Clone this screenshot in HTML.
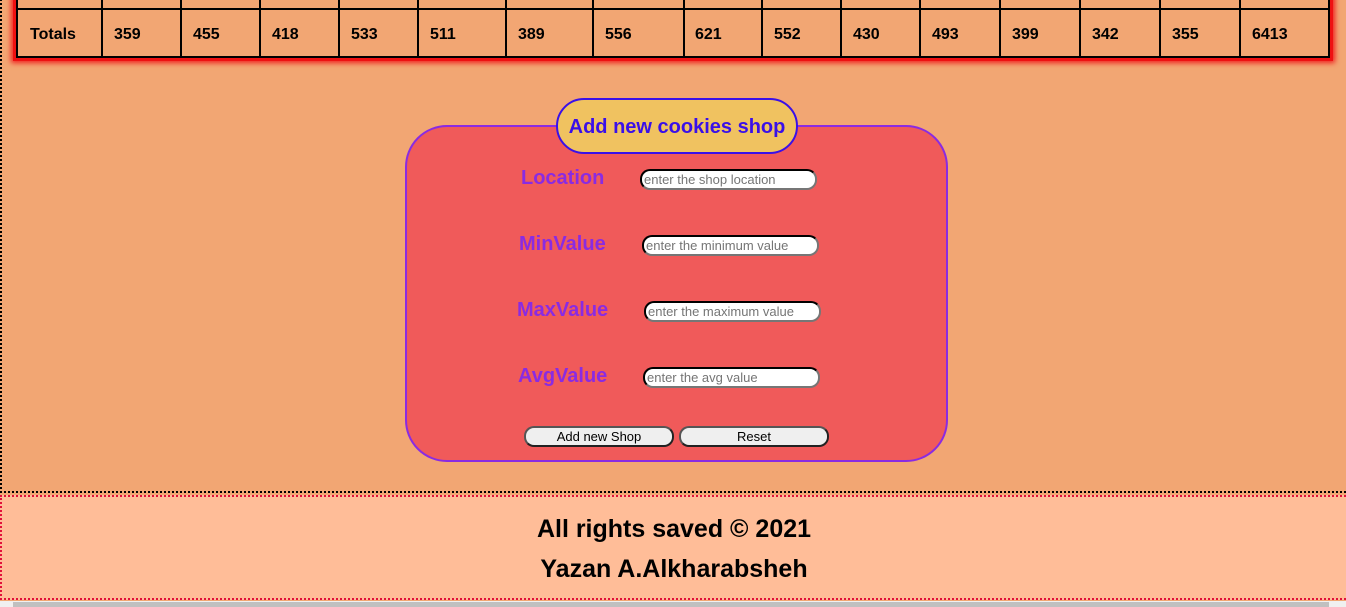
<!DOCTYPE html>
<html><head><style>
body{margin:0;width:1346px;height:607px;overflow:hidden;background:#f2a673;font-family:"Liberation Sans",Arial,sans-serif;position:relative}
.main{position:absolute;left:0;top:-10px;width:1346px;height:503px;border-left:2px dotted #000;border-bottom:2px dotted #000;box-sizing:border-box}
.tbl{position:absolute;left:13px;top:-10px;width:1320px;height:71px;border:3px solid #ee1111;box-shadow:0 0 5px 2px #f02020;box-sizing:border-box}
.tbl .in{position:absolute;left:0;top:0;right:0;bottom:0;border:2px solid #000}
.vl{position:absolute;top:0;bottom:0;width:2px;background:#000}
.hl{position:absolute;left:0;right:0;top:13px;height:2px;background:#000}
.c{position:absolute;top:31px;font-weight:bold;font-size:16px;color:#000}
.fs{position:absolute;left:405px;top:125px;width:543px;height:337px;box-sizing:border-box;background:#f05a5a;border:2px solid #8a2be2;border-radius:42px}
.lg{position:absolute;left:556px;top:98px;width:242px;height:56px;box-sizing:border-box;background:#f0c260;border:2px solid #3a10e8;border-radius:28px;color:#3a10e8;font-weight:bold;font-size:20px;text-align:center;line-height:54px}
.lb{position:absolute;color:#8a2be2;font-weight:bold;font-size:20px}
.ip{position:absolute;width:177px;height:21px;box-sizing:border-box;background:#fff;border:2px inset #767676;border-top-color:#222;border-left-color:#222;border-radius:10px;font-size:13px;color:#757575;line-height:17px;padding-left:2px;white-space:nowrap;overflow:hidden}
.bt{position:absolute;top:426px;width:150px;height:21px;box-sizing:border-box;background:#efefef;border:2px solid #555;border-right-color:#222;border-bottom-color:#222;border-radius:10px;font-size:13px;text-align:center;line-height:17px;color:#000}
.ft{position:absolute;left:0;top:495px;width:1346px;height:105px;box-sizing:border-box;background:#ffbd98;border-top:2px dotted #e0103a;border-bottom:2px dotted #e0103a;border-left:2px dotted #e0103a;text-align:center;font-weight:bold;font-size:25px;color:#000}
.sb{position:absolute;left:0;top:601px;width:1346px;height:6px;background:#f0f0f0}
.th{position:absolute;left:13px;top:602px;width:1316px;height:5px;background:#c0c0c0}
</style></head><body>
<div class="main"></div>
<div class="tbl"><div class="in">
<div class="hl"></div>
<div class="vl" style="left:83px"></div><div class="vl" style="left:162px"></div><div class="vl" style="left:241px"></div><div class="vl" style="left:320px"></div><div class="vl" style="left:399px"></div><div class="vl" style="left:487px"></div><div class="vl" style="left:574px"></div><div class="vl" style="left:665px"></div><div class="vl" style="left:743px"></div><div class="vl" style="left:822px"></div><div class="vl" style="left:901px"></div><div class="vl" style="left:981px"></div><div class="vl" style="left:1061px"></div><div class="vl" style="left:1141px"></div><div class="vl" style="left:1221px"></div>
<div class="c" style="left:12px">Totals</div>
<div class="c" style="left:96px">359</div><div class="c" style="left:175px">455</div><div class="c" style="left:254px">418</div><div class="c" style="left:333px">533</div><div class="c" style="left:412px">511</div><div class="c" style="left:500px">389</div><div class="c" style="left:587px">556</div><div class="c" style="left:677px">621</div><div class="c" style="left:756px">552</div><div class="c" style="left:835px">430</div><div class="c" style="left:914px">493</div><div class="c" style="left:994px">399</div><div class="c" style="left:1074px">342</div><div class="c" style="left:1154px">355</div><div class="c" style="left:1234px">6413</div>
</div></div>
<div class="fs"></div>
<div class="lg">Add new cookies shop</div>
<div class="lb" style="left:521px;top:167px">Location</div>
<div class="ip" style="left:640px;top:169px">enter the shop location</div>
<div class="lb" style="left:519px;top:233px">MinValue</div>
<div class="ip" style="left:642px;top:235px">enter the minimum value</div>
<div class="lb" style="left:517px;top:299px">MaxValue</div>
<div class="ip" style="left:644px;top:301px">enter the maximum value</div>
<div class="lb" style="left:518px;top:365px">AvgValue</div>
<div class="ip" style="left:643px;top:367px">enter the avg value</div>
<div class="bt" style="left:524px">Add new Shop</div>
<div class="bt" style="left:679px">Reset</div>
<div class="ft"><div style="position:absolute;left:0;right:0;top:18px">All rights saved © 2021</div><div style="position:absolute;left:0;right:0;top:58px">Yazan A.Alkharabsheh</div></div>
<div class="sb"></div><div class="th"></div>
</body></html>
